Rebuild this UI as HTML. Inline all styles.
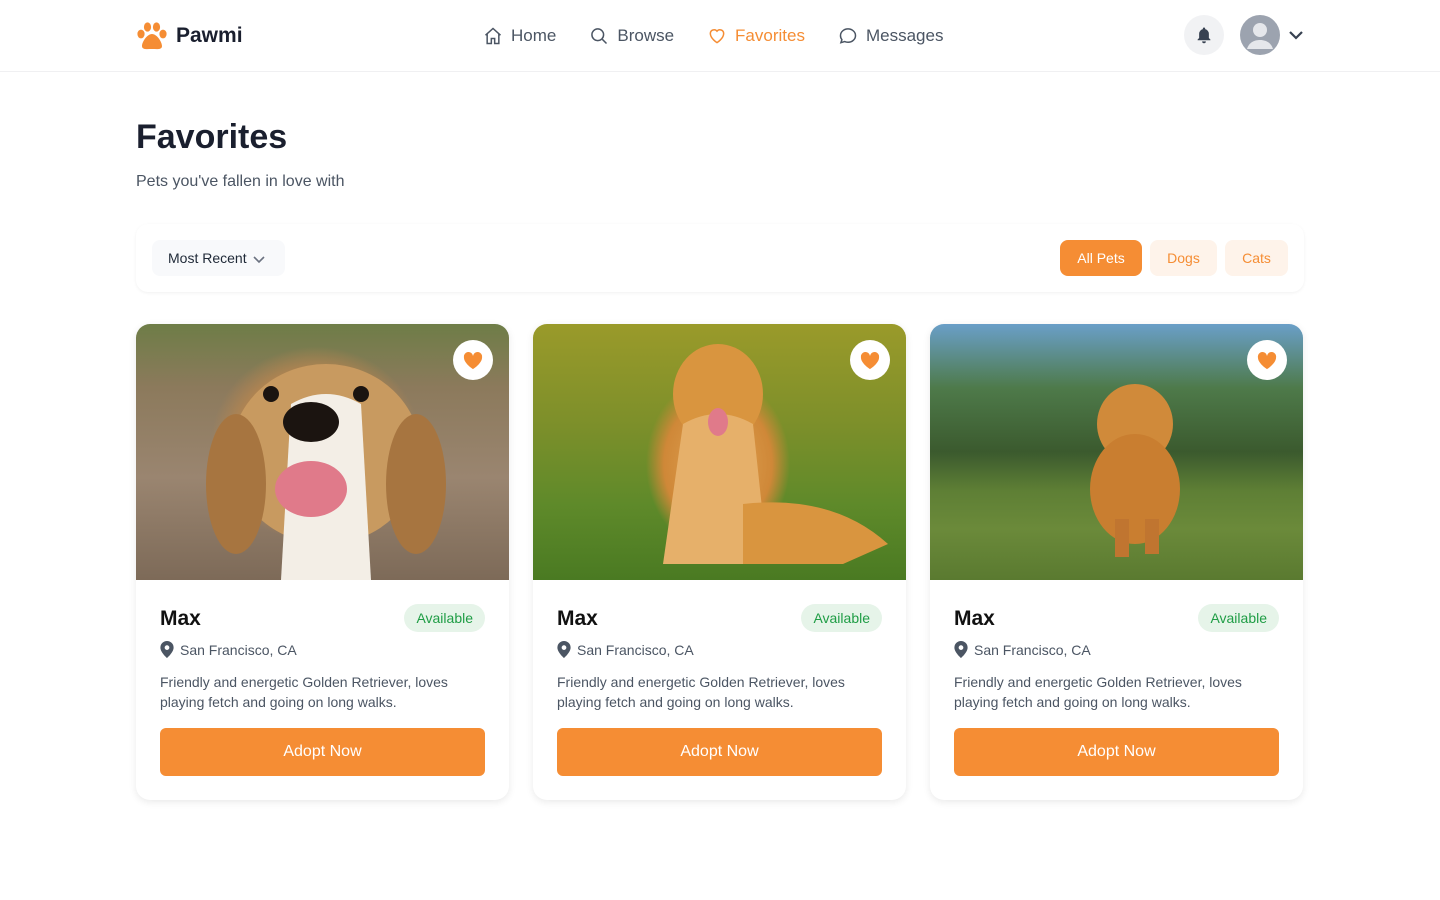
<!DOCTYPE html>
<html><head><meta charset="utf-8"><style>
*{box-sizing:border-box;margin:0;padding:0}
body{width:1440px;height:900px;background:#fff;font-family:"Liberation Sans",sans-serif;color:#111827;overflow:hidden}
.hdr{height:72px;border-bottom:1px solid #f0f0f2;position:relative}
.logo{position:absolute;left:136px;top:22px;display:flex;align-items:center;gap:8px;font-weight:bold;font-size:21px;color:#1a1f2e}
.nav{position:absolute;left:483px;top:26px;display:flex;gap:33px;font-size:17px;color:#4b5563}
.nav span{display:flex;align-items:center;gap:8px}
.nav .act{color:#f58d34}
.bell{position:absolute;left:1184px;top:15px;width:40px;height:40px;border-radius:50%;background:#f1f2f4;display:flex;align-items:center;justify-content:center}
.av{position:absolute;left:1240px;top:15px;width:40px;height:40px;border-radius:50%;background:#9ca3af;overflow:hidden}
h1{position:absolute;left:136px;top:118px;font-size:34px;font-weight:bold;color:#1a1f2e}
.sub{position:absolute;left:136px;top:173px;font-size:16px;color:#4b5563}
.bar{position:absolute;left:136px;top:224px;width:1168px;height:68px;border-radius:12px;background:#fff;box-shadow:0 1px 3px rgba(0,0,0,.06)}
.sort{position:absolute;left:16px;top:16px;height:36px;width:133px;background:#f8f9fb;border-radius:8px;font-size:14px;color:#1f2937;padding:10px 16px}
.f{position:absolute;top:16px;height:36px;border-radius:8px;font-size:14px;text-align:center;line-height:36px;background:#fef3ea;color:#f58d34}
.card{position:absolute;top:324px;width:373px;height:476px;border-radius:14px;background:#fff;box-shadow:0 2px 8px rgba(0,0,0,.09);overflow:hidden}
.img{height:256px;position:relative;overflow:hidden}
.hb{position:absolute;right:16px;top:16px;width:40px;height:40px;border-radius:50%;background:#fff;display:flex;align-items:center;justify-content:center}
.nm{position:absolute;left:24px;top:283px;font-size:21px;font-weight:bold;color:#111}
.badge{position:absolute;right:24px;top:280px;height:28px;padding:0 12px;border-radius:14px;background:#e6f4e9;color:#1f9d45;font-size:14px;line-height:28px}
.loc{position:absolute;left:24px;top:317px;font-size:14px;color:#4b5563;display:flex;align-items:center;gap:6px}
.desc{position:absolute;left:24px;top:348px;width:330px;font-size:14px;line-height:20px;color:#4b5563}
.btn{position:absolute;left:24px;top:404px;width:325px;height:48px;border-radius:6px;background:#f58d34;color:#fff;font-size:16px;text-align:center;line-height:48px}
</style></head><body>
<div class="hdr">
 <div class="logo"><svg width="32" height="28" viewBox="0 0 32 28" fill="#f58d34"><ellipse cx="5" cy="12" rx="3.6" ry="4.4"/><ellipse cx="11.5" cy="5" rx="3.6" ry="4.6"/><ellipse cx="20.5" cy="5" rx="3.6" ry="4.6"/><ellipse cx="27" cy="12" rx="3.6" ry="4.4"/><path d="M16 12c-5 0-10 8-10 12 0 4 5 3 10 3s10 1 10-3c0-4-5-12-10-12z"/></svg>Pawmi</div>
 <div class="nav">
  <span><svg width="20" height="20" viewBox="0 0 24 24" fill="none" stroke="#4b5563" stroke-width="1.8"><path d="M3 11l9-8 9 8M5 9.5V21h5v-6h4v6h5V9.5"/></svg>Home</span>
  <span><svg width="20" height="20" viewBox="0 0 24 24" fill="none" stroke="#4b5563" stroke-width="1.8"><circle cx="10.5" cy="10.5" r="7"/><path d="M16 16l5 5"/></svg>Browse</span>
  <span class="act"><svg width="20" height="20" viewBox="0 0 24 24" fill="none" stroke="#f58d34" stroke-width="1.8"><path d="M12 20s-8-5-8-11a4.5 4.5 0 018-2.8A4.5 4.5 0 0120 9c0 6-8 11-8 11z"/></svg>Favorites</span>
  <span><svg width="20" height="20" viewBox="0 0 24 24" fill="none" stroke="#4b5563" stroke-width="1.8"><path d="M12 3.5c5 0 9 3.6 9 8s-4 8-9 8c-1.5 0-2.9-.3-4-.8L3.5 20l1.2-3.6A7.6 7.6 0 013 11.5c0-4.4 4-8 9-8z"/></svg>Messages</span>
 </div>
 <div class="bell"><svg width="18" height="18" viewBox="0 0 24 24" fill="#374151"><path d="M12 2a1.6 1.6 0 00-1.6 1.6v.6A6.5 6.5 0 005.5 10.5V16L3.5 18v1h17v-1l-2-2v-5.5a6.5 6.5 0 00-4.9-6.3v-.6A1.6 1.6 0 0012 2zM9.5 20.5a2.5 2.5 0 005 0z"/></svg></div>
 <div class="av"><svg width="40" height="40" viewBox="0 0 40 40"><circle cx="20" cy="15" r="7" fill="#e5e7eb"/><path d="M7 34c2-7 8-9 13-9s11 2 13 9" fill="#e5e7eb"/></svg></div>
 <svg style="position:absolute;left:1288px;top:28px" width="16" height="14" viewBox="0 0 16 14" fill="none" stroke="#374151" stroke-width="2.2"><path d="M2 4l6 6 6-6"/></svg>
</div>
<h1>Favorites</h1>
<div class="sub">Pets you've fallen in love with</div>
<div class="bar">
 <div class="sort">Most Recent <svg width="14" height="10" viewBox="0 0 14 10" fill="none" stroke="#6b7280" stroke-width="1.6" style="vertical-align:-1px;margin-left:2px"><path d="M2 3l5 5 5-5"/></svg></div>
 <div class="f" style="left:924px;width:82px;background:#f58d34;color:#fff">All Pets</div>
 <div class="f" style="left:1014px;width:67px">Dogs</div>
 <div class="f" style="left:1089px;width:63px">Cats</div>
</div>

<div class="card" style="left:136px">
 <div class="img" style="background:radial-gradient(ellipse 140px 130px at 180px 120px,#c8a06a 0,#b48550 55%,transparent 75%),linear-gradient(180deg,#6e7d47 0,#8c7a5c 25%,#9a8570 60%,#7d6a58 100%)">
  <svg style="position:absolute;left:60px;top:20px" width="260" height="236" viewBox="0 0 260 236"><ellipse cx="130" cy="110" rx="95" ry="90" fill="#c89a60"/><ellipse cx="40" cy="140" rx="30" ry="70" fill="#a77540"/><ellipse cx="220" cy="140" rx="30" ry="70" fill="#a77540"/><path d="M95 60 Q130 40 165 60 L175 236 H85z" fill="#f3eee6"/><ellipse cx="115" cy="78" rx="28" ry="20" fill="#1b1410"/><ellipse cx="115" cy="145" rx="36" ry="28" fill="#e07a8a"/><ellipse cx="75" cy="50" rx="8" ry="8" fill="#1b1410"/><ellipse cx="165" cy="50" rx="8" ry="8" fill="#1b1410"/></svg>
  <div class="hb"><svg width="22" height="20" viewBox="0 0 24 22" fill="#f58d34"><path d="M12 21S2 15 2 8a5 5 0 0110-1.5A5 5 0 0122 8c0 7-10 13-10 13z"/></svg></div>
 </div>
 <div class="nm">Max</div><div class="badge">Available</div>
 <div class="loc"><svg width="14" height="17" viewBox="0 0 14 18" fill="#4b5563"><path d="M7 0a7 7 0 00-7 7c0 5 7 11 7 11s7-6 7-11a7 7 0 00-7-7zm0 9.5A2.5 2.5 0 117 4.5a2.5 2.5 0 010 5z"/></svg>San Francisco, CA</div>
 <div class="desc">Friendly and energetic Golden Retriever, loves playing fetch and going on long walks.</div>
 <div class="btn">Adopt Now</div>
</div>

<div class="card" style="left:533px">
 <div class="img" style="background:radial-gradient(ellipse 90px 110px at 185px 140px,#e2a555 0,#cf8838 60%,transparent 80%),linear-gradient(180deg,#9a9a2a 0,#7c8f2a 40%,#5f8a2a 70%,#4a7a22 100%)">
  <svg style="position:absolute;left:110px;top:10px" width="250" height="246" viewBox="0 0 250 246"><ellipse cx="75" cy="60" rx="45" ry="50" fill="#d9953f"/><path d="M40 90 Q75 70 110 90 L125 230 H20z" fill="#e6b06a"/><path d="M100 170 Q190 160 245 210 L200 230 H100z" fill="#d9953f"/><ellipse cx="75" cy="88" rx="10" ry="14" fill="#e07a8a"/></svg>
  <div class="hb"><svg width="22" height="20" viewBox="0 0 24 22" fill="#f58d34"><path d="M12 21S2 15 2 8a5 5 0 0110-1.5A5 5 0 0122 8c0 7-10 13-10 13z"/></svg></div>
 </div>
 <div class="nm">Max</div><div class="badge">Available</div>
 <div class="loc"><svg width="14" height="17" viewBox="0 0 14 18" fill="#4b5563"><path d="M7 0a7 7 0 00-7 7c0 5 7 11 7 11s7-6 7-11a7 7 0 00-7-7zm0 9.5A2.5 2.5 0 117 4.5a2.5 2.5 0 010 5z"/></svg>San Francisco, CA</div>
 <div class="desc">Friendly and energetic Golden Retriever, loves playing fetch and going on long walks.</div>
 <div class="btn">Adopt Now</div>
</div>

<div class="card" style="left:930px">
 <div class="img" style="background:linear-gradient(180deg,#6a9fc8 0,#4e7a4a 25%,#3b5a2e 50%,#5e7f35 65%,#6b8a3a 80%,#5a7a30 100%)">
  <svg style="position:absolute;left:140px;top:55px" width="130" height="180" viewBox="0 0 130 180"><ellipse cx="65" cy="45" rx="38" ry="40" fill="#d08a3a"/><ellipse cx="65" cy="110" rx="45" ry="55" fill="#c97e30"/><rect x="45" y="140" width="14" height="38" fill="#c07530"/><rect x="75" y="140" width="14" height="35" fill="#c07530"/></svg>
  <div class="hb"><svg width="22" height="20" viewBox="0 0 24 22" fill="#f58d34"><path d="M12 21S2 15 2 8a5 5 0 0110-1.5A5 5 0 0122 8c0 7-10 13-10 13z"/></svg></div>
 </div>
 <div class="nm">Max</div><div class="badge">Available</div>
 <div class="loc"><svg width="14" height="17" viewBox="0 0 14 18" fill="#4b5563"><path d="M7 0a7 7 0 00-7 7c0 5 7 11 7 11s7-6 7-11a7 7 0 00-7-7zm0 9.5A2.5 2.5 0 117 4.5a2.5 2.5 0 010 5z"/></svg>San Francisco, CA</div>
 <div class="desc">Friendly and energetic Golden Retriever, loves playing fetch and going on long walks.</div>
 <div class="btn">Adopt Now</div>
</div>
</body></html>
